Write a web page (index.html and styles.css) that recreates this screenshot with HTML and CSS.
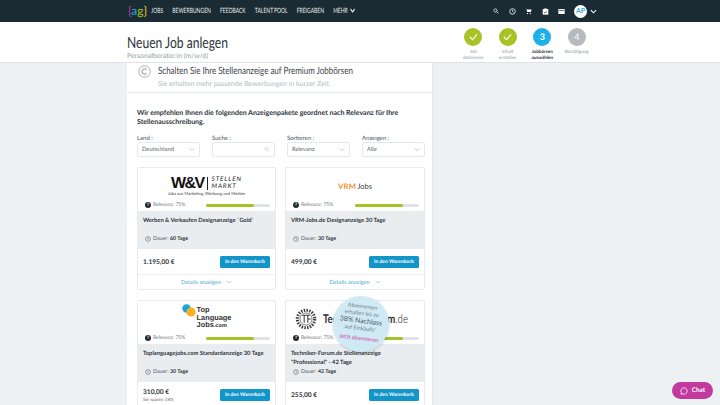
FILE: index.html
```html
<!DOCTYPE html>
<html lang="de">
<head>
  <title>Neuen Job anlegen</title>
  <meta charset="utf-8">
  <link rel="stylesheet" href="styles.css">
</head>
<body>

<header class="topbar">
  <div class="wrap topbar-inner">
    <div class="logo"><span class="br-a">{</span><span class="lg-a">a</span><span class="lg-g">g</span><span class="br-b">}</span></div>
    <nav class="nav">
      <a>Jobs</a>
      <a>Bewerbungen</a>
      <a>Feedback</a>
      <a>Talent Pool</a>
      <a>Freigaben</a>
      <a>Mehr <svg class="chev nav-chev" viewBox="0 0 8 5"><path d="M1 1l3 3 3-3" fill="none" stroke="#fff" stroke-width="1.2"/></svg></a>
    </nav>
    <div class="tools">
      <svg class="tool" viewBox="0 0 10 10"><circle cx="4" cy="4" r="2.6" fill="none" stroke="#fff" stroke-width="1.2"/><path d="M6 6l3 3" stroke="#fff" stroke-width="1.4"/></svg>
      <svg class="tool" viewBox="0 0 10 10"><circle cx="5" cy="5" r="4" fill="none" stroke="#fff" stroke-width="1.1"/><path d="M5 2.6V5l1.8 1.4" fill="none" stroke="#fff"/></svg>
      <svg class="tool" viewBox="0 0 10 10"><path d="M.5 1h1.6l.3 1h7l-1 3.8H3.2L2 1.6" fill="#fff"/><circle cx="3.6" cy="8" r="1" fill="#fff"/><circle cx="7.6" cy="8" r="1" fill="#fff"/></svg>
      <svg class="tool" viewBox="0 0 10 10"><path d="M1 1.5h8v8H1z" fill="#fff"/><path d="M3.5 .5h3v2h-3z" fill="#fff"/><path d="M3 6l1.4 1.3L7 4.5" fill="none" stroke="#1b2b33"/></svg>
      <svg class="tool" viewBox="0 0 10 10"><path d="M.5 1.5h9v7h-9z" fill="#fff"/><path d="M1.5 3.5h7" stroke="#1b2b33"/></svg>
      <span class="avatar">AP</span>
      <svg class="chev" viewBox="0 0 8 5"><path d="M1 1l3 3 3-3" fill="none" stroke="#fff" stroke-width="1.2"/></svg>
    </div>
  </div>
</header>

<section class="subhead">
  <div class="wrap subhead-inner">
    <div class="page-title">
      <h1>Neuen Job anlegen</h1>
      <p>Personalberater:in (m/w/d)</p>
    </div>
    <ol class="steps">
      <li class="step done"><span class="dot"><svg viewBox="0 0 10 8"><path d="M1 4l3 3 5-6" fill="none" stroke="#fff" stroke-width="1.2"/></svg></span>Job<br>definieren</li>
      <li class="step done"><span class="dot"><svg viewBox="0 0 10 8"><path d="M1 4l3 3 5-6" fill="none" stroke="#fff" stroke-width="1.2"/></svg></span>Inhalt<br>erstellen</li>
      <li class="step current"><span class="dot">3</span>Jobbörsen<br>auswählen</li>
      <li class="step todo"><span class="dot">4</span>Bestätigung</li>
    </ol>
  </div>
</section>

<main class="panel">
  <div class="panel-head">
    <svg class="euro" viewBox="0 0 14 14"><circle cx="7" cy="7" r="6.2" fill="none" stroke="#8d979d" stroke-width=".8"/><path d="M9.6 4.6A3.4 3.4 0 1 0 9.6 9.4M8.8 5.6A2.2 2.2 0 1 0 8.8 8.4" fill="none" stroke="#8d979d" stroke-width=".7"/></svg>
    <div>
      <h2>Schalten Sie Ihre Stellenanzeige auf Premium Jobbörsen</h2>
      <p>Sie erhalten mehr passende Bewerbungen in kurzer Zeit.</p>
    </div>
  </div>

  <div class="panel-body">
    <p class="intro">Wir empfehlen Ihnen die folgenden Anzeigenpakete geordnet nach Relevanz für Ihre Stellenausschreibung.</p>

    <div class="filters">
      <div class="filter"><label>Land :</label><div class="field">Deutschland<svg class="caret" viewBox="0 0 8 5"><path d="M1 1l3 3 3-3" fill="none" stroke="#9aa3a9" stroke-width=".8"/></svg></div></div>
      <div class="filter"><label>Suche :</label><div class="field"><svg class="caret" viewBox="0 0 10 10"><circle cx="4" cy="4" r="3" fill="none" stroke="#a5adb3" stroke-width=".8"/><path d="M6.2 6.2L9 9" stroke="#a5adb3" stroke-width=".8"/></svg></div></div>
      <div class="filter"><label>Sortieren :</label><div class="field">Relevanz<svg class="caret" viewBox="0 0 8 5"><path d="M1 1l3 3 3-3" fill="none" stroke="#9aa3a9" stroke-width=".8"/></svg></div></div>
      <div class="filter"><label>Anzeigen :</label><div class="field">Alle<svg class="caret" viewBox="0 0 8 5"><path d="M1 1l3 3 3-3" fill="none" stroke="#9aa3a9" stroke-width=".8"/></svg></div></div>
    </div>

    <div class="cards">

      <article class="card">
        <div class="card-logo">
          <div class="wv">
            <div class="wv-top"><span class="wv-mark">W&amp;V</span><span class="wv-word">STELLEN<br>MARKT</span></div>
            <div class="wv-sub">Jobs aus Marketing, Werbung und Medien</div>
          </div>
        </div>
        <div class="relevance"><span class="help">?</span>Relevanz: 75%<span class="bar"><span class="bar-fill" style="width:75%"></span></span></div>
        <div class="card-info">
          <h3>Werben &amp; Verkaufen Designanzeige `Gold`</h3>
          <div class="duration"><svg class="clock" viewBox="0 0 10 10"><circle cx="5" cy="5" r="4" fill="none" stroke="#3b454b" stroke-width=".8"/><path d="M5 2.8V5l1.6 1" fill="none" stroke="#3b454b" stroke-width=".8"/></svg>Dauer: <b>60 Tage</b></div>
        </div>
        <div class="card-buy"><div class="price">1.195,00 €</div><a class="btn">In den Warenkorb</a></div>
        <div class="card-more">Details anzeigen<svg class="more-chev" viewBox="0 0 8 5"><path d="M1 1l3 3 3-3" fill="none" stroke="#8d979d" stroke-width=".7"/></svg></div>
      </article>

      <article class="card">
        <div class="card-logo"><div class="vrm"><span class="vrm-a">VRM</span>Jobs</div></div>
        <div class="relevance"><span class="help">?</span>Relevanz: 75%<span class="bar"><span class="bar-fill" style="width:75%"></span></span></div>
        <div class="card-info">
          <h3>VRM-Jobs.de Designanzeige 30 Tage</h3>
          <div class="duration"><svg class="clock" viewBox="0 0 10 10"><circle cx="5" cy="5" r="4" fill="none" stroke="#3b454b" stroke-width=".8"/><path d="M5 2.8V5l1.6 1" fill="none" stroke="#3b454b" stroke-width=".8"/></svg>Dauer: <b>30 Tage</b></div>
        </div>
        <div class="card-buy"><div class="price">499,00 €</div><a class="btn">In den Warenkorb</a></div>
        <div class="card-more">Details anzeigen<svg class="more-chev" viewBox="0 0 8 5"><path d="M1 1l3 3 3-3" fill="none" stroke="#8d979d" stroke-width=".7"/></svg></div>
      </article>

      <article class="card">
        <div class="card-logo">
          <div class="tlj">
            <svg class="tlj-dots" viewBox="0 0 14 16"><circle cx="4.5" cy="4.5" r="4.2" fill="#1ba6e0"/><circle cx="9" cy="8" r="4.6" fill="#f9b122"/></svg>
            <div class="tlj-text">Top<br>Language<br>Jobs<span>.com</span></div>
          </div>
        </div>
        <div class="relevance"><span class="help">?</span>Relevanz: 75%<span class="bar"><span class="bar-fill" style="width:75%"></span></span></div>
        <div class="card-info">
          <h3>Toplanguagejobs.com Standardanzeige 30 Tage</h3>
          <div class="duration"><svg class="clock" viewBox="0 0 10 10"><circle cx="5" cy="5" r="4" fill="none" stroke="#3b454b" stroke-width=".8"/><path d="M5 2.8V5l1.6 1" fill="none" stroke="#3b454b" stroke-width=".8"/></svg>Dauer: <b>30 Tage</b></div>
        </div>
        <div class="card-buy"><div class="price">310,00 €<small>Sie sparen 14%</small></div><a class="btn">In den Warenkorb</a></div>
      </article>

      <article class="card">
        <div class="card-logo">
          <div class="tf">
            <svg class="tf-gear" viewBox="0 0 24 24"><circle cx="12" cy="12" r="9.5" fill="none" stroke="#3d3d3d" stroke-width="3.4" stroke-dasharray="1.6 1.4"/><circle cx="12" cy="12" r="6.6" fill="none" stroke="#555" stroke-width=".8"/><path d="M8 8h8M10 8v8M14 8v8M14 12h3" stroke="#333" stroke-width="1.1" fill="none"/></svg>
            <span class="tf-name">Techniker-Forum<span>.de</span></span>
          </div>
        </div>
        <div class="relevance"><span class="help">?</span>Relevanz: 75%<span class="bar"><span class="bar-fill" style="width:75%"></span></span></div>
        <div class="card-info">
          <h3>Techniker-Forum.de Stellenanzeige<br>"Professional" - 42 Tage</h3>
          <div class="duration"><svg class="clock" viewBox="0 0 10 10"><circle cx="5" cy="5" r="4" fill="none" stroke="#3b454b" stroke-width=".8"/><path d="M5 2.8V5l1.6 1" fill="none" stroke="#3b454b" stroke-width=".8"/></svg>Dauer: <b>42 Tage</b></div>
        </div>
        <div class="card-buy"><div class="price">255,00 €</div><a class="btn">In den Warenkorb</a></div>
        <div class="promo">
          <div class="promo-text">
            Abonnenten<br>erhalten bis zu<br><span class="promo-big">38% Nachlass</span><br>auf Einkäufe!
            <div class="promo-link">Jetzt abonnieren</div>
          </div>
        </div>
      </article>

    </div>
  </div>
</main>

<a class="chat">
  <svg class="chat-ico" viewBox="0 0 10 10"><path d="M5 1a4 4 0 1 1-2 7.5L1.2 9l.5-1.8A4 4 0 0 1 5 1z" fill="none" stroke="#fff" stroke-width="1"/></svg>
  Chat
</a>

</body>
</html>
```

FILE: styles.css
```css
html, body {
  margin: 0;
  padding: 0;
  height: 405px;
  overflow: hidden;
}
body {
  background: #eef1f3;
  color: #2b3439;
  font-family: "Lato", "Open Sans", sans-serif;
  font-size: 6px;
  line-height: 8px;
  text-rendering: geometricPrecision;
}
h1, h2, h3, p, ol {
  margin: 0;
  padding: 0;
  font-weight: normal;
}

.wrap {
  margin-left: 127px;
  width: 470px;
}

/* top bar */
.topbar {
  height: 22px;
  background: #1a2b33;
  color: #fff;
}
.topbar-inner {
  display: flex;
  align-items: center;
  height: 22px;
}
.logo {
  width: 24px;
  padding-left: 1px;
  box-sizing: border-box;
  font-size: 12px;
  line-height: 20px;
  white-space: nowrap;
}
.br-a { color: #c43a97; }
.br-b { color: #e6c92c; }
.lg-a { color: #2aa7df; }
.lg-g { color: #a8c42c; }
/* no condensed face installed, so the nav is squeezed as a whole */
.nav {
  display: flex;
  gap: 13px;
  font-size: 7.2px;
  word-spacing: -.4px;
  text-transform: uppercase;
  color: #e8ecee;
  transform: scaleX(.7);
  transform-origin: left center;
}
.chev {
  width: 7px;
  height: 5px;
}
.nav-chev {
  width: 10px;
}
.tools {
  display: flex;
  align-items: center;
  margin-left: auto;
}
.tool {
  width: 7px;
  height: 7px;
  margin-right: 9.6px;
}
.tools .tool:first-child {
  width: 6px;
  height: 6px;
}
.avatar {
  width: 13px;
  height: 13px;
  border-radius: 50%;
  background: #fff;
  color: #33a9e0;
  font-size: 7px;
  font-weight: 700;
  line-height: 13px;
  text-align: center;
  margin: 0 3px 0 -1px;
}

/* title and wizard */
.subhead {
  height: 40px;
  background: #fff;
  border-bottom: 1px solid #dfe3e6;
}
.subhead-inner {
  display: flex;
  justify-content: space-between;
}
.page-title {
  padding-top: 12px;
}
.page-title h1 {
  font-size: 15.5px;
  line-height: 18px;
  color: #28333a;
  transform: scaleX(.78);
  transform-origin: left center;
}
.page-title p {
  color: #969ea3;
  font-size: 6.9px;
  line-height: 8px;
}
.steps {
  display: flex;
  list-style: none;
  padding: 6px 3px 0 0;
}
.step {
  width: 34.5px;
  box-sizing: border-box;
  text-align: center;
  font-size: 4.6px;
  line-height: 6px;
  color: #8a9399;
}
.dot {
  display: flex;
  align-items: center;
  justify-content: center;
  width: 18px;
  height: 18px;
  margin: 0 auto 2px;
  border-radius: 50%;
  color: #fff;
  font-size: 9px;
}
.dot svg {
  width: 9px;
  height: 8px;
}
.done .dot { background: #a8c326; }
.current .dot { background: #1fb0e8; }
.todo .dot { background: #b4babf; }
.current { color: #2b3439; font-weight: 700; }

/* main panel */
.panel {
  margin-left: 127px;
  width: 306px;
  background: #fff;
  border-right: 1px solid #e3e7ea;
  box-sizing: border-box;
}
.panel-head {
  display: flex;
  height: 30px;
  padding: 2px 0 0 11px;
  box-sizing: border-box;
  border-bottom: 1px solid #e6e9ec;
}
.euro {
  width: 13px;
  height: 13px;
  margin: 0 7px 0 0;
}
.panel-head h2 {
  font-size: 10px;
  line-height: 12px;
  color: #3a454b;
  white-space: nowrap;
  transform: scaleX(.8);
  transform-origin: left center;
}
.panel-head p {
  color: #b4bbbf;
  font-size: 7px;
  line-height: 8px;
  margin-top: 3px;
}
.panel-body {
  padding: 16px 9px 0 10px;
}
.intro {
  font-size: 7px;
  line-height: 8.6px;
  font-weight: 700;
  color: #2d363b;
  width: 290px;
}

/* filters */
.filters {
  display: grid;
  grid-template-columns: repeat(4, 62.5px);
  column-gap: 12.5px;
  margin-top: 9px;
}
.filter label {
  display: block;
  height: 7px;
  font-size: 6px;
  line-height: 8px;
  color: #4a5359;
}
.field {
  position: relative;
  height: 15px;
  padding-left: 4px;
  border: 1px solid #e6e9ec;
  border-radius: 2px;
  box-sizing: border-box;
  font-size: 5.8px;
  line-height: 13px;
  color: #5b646a;
}
.caret {
  position: absolute;
  right: 4px;
  top: 4px;
  width: 6px;
  height: 5px;
}

/* job board cards */
.cards {
  display: grid;
  grid-template-columns: 139px 140px;
  column-gap: 9px;
  row-gap: 10px;
  margin-top: 10px;
}
.card {
  position: relative;
  border: 1px solid #e8ebee;
  border-radius: 2px;
  box-sizing: border-box;
  background: #fff;
}
.card-logo {
  height: 33px;
  padding-top: 3px;
  box-sizing: border-box;
  display: flex;
  justify-content: center;
  align-items: center;
}
.relevance {
  display: flex;
  align-items: center;
  height: 8px;
  padding: 0 5px 0 7px;
  margin-bottom: 2px;
  font-size: 5.1px;
  color: #6b747a;
}
.help {
  width: 6px;
  height: 6px;
  margin-right: 2px;
  border-radius: 50%;
  background: #1f2a30;
  color: #fff;
  font-size: 4.4px;
  line-height: 6px;
  font-weight: 700;
  text-align: center;
}
.bar {
  width: 64px;
  height: 3px;
  margin-left: auto;
  border-radius: 2px;
  background: #dfe3e6;
}
.bar-fill {
  display: block;
  height: 3px;
  border-radius: 2px;
  background: #a5c226;
}
.card-info {
  height: 38px;
  padding: 6px 5px 0;
  background: #e9edf0;
  box-sizing: border-box;
  position: relative;
}
.card-info h3 {
  font-size: 5.8px;
  line-height: 8.5px;
  font-weight: 700;
  color: #2b3439;
}
.duration {
  position: absolute;
  left: 7px;
  bottom: 6px;
  display: flex;
  align-items: center;
  font-size: 5.3px;
  line-height: 8px;
  color: #5b646a;
  white-space: pre;
}
.duration b { color: #2b3439; }
.clock {
  width: 6px;
  height: 6px;
  margin-right: 2px;
}
.card-buy {
  display: flex;
  justify-content: space-between;
  align-items: center;
  height: 26px;
  padding: 1px 5px 0;
  border-bottom: 1px solid #eef0f2;
  box-sizing: border-box;
}
.price {
  font-size: 6.6px;
  line-height: 9px;
  font-weight: 700;
  color: #2b3439;
}
.price small {
  display: block;
  font-size: 4.6px;
  line-height: 5px;
  font-weight: normal;
  color: #5b646a;
}
.btn {
  width: 50px;
  height: 12px;
  border-radius: 1.5px;
  background: #1295c9;
  color: #fff;
  font-size: 5px;
  line-height: 12px;
  font-weight: 700;
  text-align: center;
}
.card-more {
  height: 14px;
  font-size: 5.6px;
  line-height: 15px;
  text-align: center;
  color: #46a9d4;
}
.more-chev {
  width: 6px;
  height: 4px;
  margin-left: 5px;
}

/* logos */
.wv-top {
  display: flex;
  align-items: center;
  justify-content: center;
}
.wv-mark {
  font-family: "Liberation Sans", sans-serif;
  font-size: 16px;
  line-height: 14px;
  font-weight: 700;
  letter-spacing: -1.6px;
  color: #111;
  padding-right: 4px;
}
.wv-word {
  font-style: italic;
  font-size: 6.4px;
  line-height: 6.6px;
  letter-spacing: .9px;
  color: #222;
  padding-left: 3px;
  border-left: 1px solid #222;
}
.wv-sub {
  font-size: 4.2px;
  line-height: 5px;
  color: #444;
  text-align: center;
}
.vrm {
  font-size: 7.6px;
  line-height: 10px;
  color: #444;
}
.vrm-a {
  color: #f0912a;
  font-weight: 700;
  letter-spacing: .3px;
  padding-right: 1px;
}
.tlj {
  display: flex;
  margin-top: -3px;
}
.tlj-dots {
  width: 14px;
  height: 16px;
  margin: 0 1px 0 0;
}
.tlj-text {
  font-family: "Liberation Sans", sans-serif;
  font-size: 7.4px;
  line-height: 7.6px;
  font-weight: 700;
  color: #333;
  padding-top: 2px;
}
.tlj-text span { font-size: 5.6px; }
.tf {
  display: flex;
  align-items: center;
  width: 128px;
  padding-left: 4px;
  box-sizing: border-box;
}
.tf-gear {
  flex-shrink: 0;
  width: 22px;
  height: 22px;
  margin-right: 6px;
}
.tf-name {
  font-size: 12px;
  font-weight: 700;
  color: #333;
  white-space: nowrap;
  transform: scaleX(.8);
  transform-origin: left center;
}
.tf-name span {
  font-weight: normal;
  color: #777;
}

/* subscriber promo bubble */
.promo {
  position: absolute;
  left: 47px;
  top: -5px;
  width: 56px;
  height: 56px;
  border-radius: 50%;
  background: #cfeaf4;
  box-shadow: 0 1px 3px rgba(60, 90, 100, .25);
}
.promo-text {
  transform: rotate(7deg);
  padding-top: 8px;
  font-size: 5.4px;
  line-height: 7px;
  text-align: center;
  color: #6f7e85;
}
.promo-big {
  font-size: 7px;
  color: #4a565c;
}
.promo-link {
  font-size: 5.4px;
  color: #d6379f;
  margin-top: 3px;
}

/* chat button */
.chat {
  position: absolute;
  left: 672px;
  top: 382px;
  display: flex;
  align-items: center;
  justify-content: center;
  gap: 4px;
  width: 41px;
  height: 17px;
  border-radius: 9px;
  background: #c23a9e;
  color: #fff;
  font-size: 6.4px;
  font-weight: 700;
}
.chat-ico {
  width: 8px;
  height: 8px;
}
```
